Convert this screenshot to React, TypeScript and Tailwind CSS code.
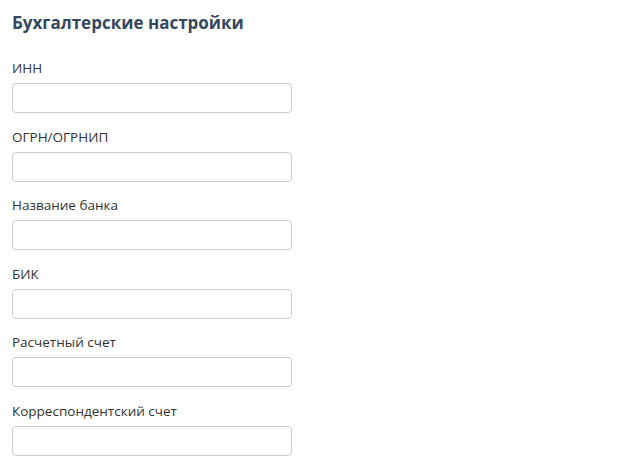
const fields = [
  "ИНН",
  "ОГРН/ОГРНИП",
  "Название банка",
  "БИК",
  "Расчетный счет",
  "Корреспондентский счет",
];

export default function App() {
  return (
    <div className="min-h-screen bg-white px-3 pt-[11px] font-['Open_Sans',sans-serif]">
      <h2 className="mb-[23px] text-[17px] font-bold leading-6 text-[#34495e]">
        Бухгалтерские настройки
      </h2>
      {fields.map((label) => (
        <div key={label} className="mb-[13.6px]">
          <label className="mb-[5px] block text-[13.5px] leading-5 text-[#333]">{label}</label>
          <input
            type="text"
            className="block h-[30px] w-[280px] rounded-[4px] border border-[#ccc] bg-white px-2 text-[14px] outline-none"
          />
        </div>
      ))}
    </div>
  );
}
